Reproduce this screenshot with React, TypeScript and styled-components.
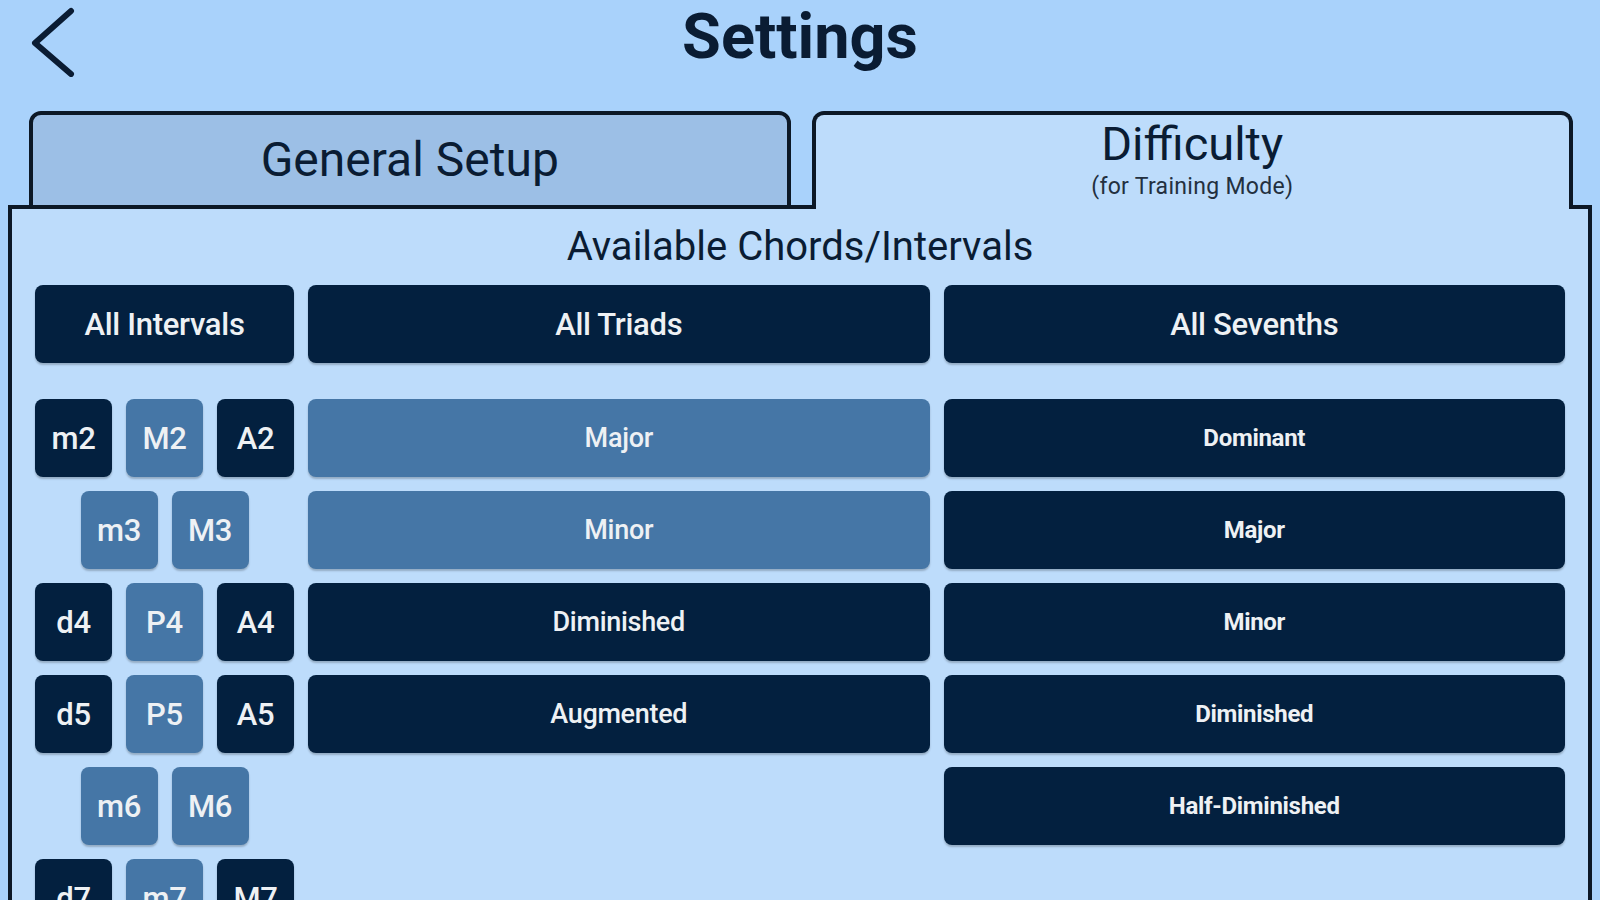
import styled, { createGlobalStyle } from "styled-components";

const C = {
  bg: "#a9d2fb",
  panel: "#bddcfb",
  tabOff: "#9cbfe6",
  line: "#0c1826",
  navy: "#03203f",
  steel: "#4576a6",
  ink: "#0a1c33",
};

const Global = createGlobalStyle`
  html, body {
    margin: 0;
    padding: 0;
    overflow: hidden;
    background: ${C.bg};
    font-family: Roboto, "Noto Sans", "Liberation Sans", sans-serif;
  }
  * { box-sizing: border-box; }
`;

const Screen = styled.div`
  width: 1600px;
  height: 900px;
  background: ${C.bg};
`;

const Header = styled.header`
  height: 111px;
  display: flex;
  justify-content: center;
  align-items: flex-start;
  position: relative;
`;

const BackButton = styled.button`
  position: absolute;
  left: 27px;
  top: 5px;
  width: 48px;
  height: 72px;
  padding: 0;
  border: none;
  background: none;
  cursor: pointer;
`;

const Title = styled.h1`
  margin: 0;
  padding-top: 1px;
  font-size: 63px;
  line-height: 72px;
  font-weight: 700;
  color: ${C.ink};
`;

const TabsRow = styled.div`
  display: flex;
  gap: 21px;
  padding: 0 27px 0 29px;
  margin-bottom: -4px;
  position: relative;
  z-index: 1;
`;

const Tab = styled.div<{ $active?: boolean }>`
  flex: 1;
  height: 98px;
  border: 4px solid ${C.line};
  border-bottom: ${(p) => (p.$active ? "none" : `4px solid ${C.line}`)};
  border-radius: 12px 12px 0 0;
  background: ${(p) => (p.$active ? C.panel : C.tabOff)};
  display: flex;
  flex-direction: column;
  align-items: center;
  justify-content: ${(p) => (p.$active ? "flex-start" : "center")};
  padding-top: ${(p) => (p.$active ? "3px" : "0")};
  color: ${C.ink};
  cursor: pointer;
`;

const TabLabel = styled.span<{ $size: number }>`
  font-size: ${(p) => p.$size}px;
  line-height: 52px;
`;

const TabNote = styled.span`
  margin-top: 4px;
  font-size: 23px;
  line-height: 26px;
  letter-spacing: 0.3px;
  color: #23303f;
`;

const Panel = styled.section`
  margin: 0 8px;
  height: 800px;
  border: 4px solid ${C.line};
  border-bottom: none;
  background: ${C.panel};
  padding: 0 23px;
`;

const Heading = styled.h2`
  margin: 0;
  padding: 14px 0 14px;
  text-align: center;
  font-size: 40px;
  line-height: 48px;
  font-weight: 400;
  color: ${C.ink};
`;

const Grid = styled.div`
  display: grid;
  grid-template-columns: 259px 1fr 1fr;
  column-gap: 14px;
  row-gap: 36px;
`;

const Stack = styled.div`
  display: flex;
  flex-direction: column;
  gap: 14px;
`;

const KeyRow = styled.div`
  display: flex;
  justify-content: center;
  gap: 14px;
`;

const Key = styled.button<{ $on?: boolean; $fs: number; $fw?: number; $square?: boolean }>`
  height: 78px;
  width: ${(p) => (p.$square ? "77px" : "100%")};
  flex: none;
  border: none;
  border-radius: 8px;
  background: ${(p) => (p.$on ? C.steel : C.navy)};
  box-shadow: 0 2px 2px rgba(0, 0, 0, 0.22);
  color: #eef1f4;
  font-family: Roboto, "Noto Sans", sans-serif;
  font-size: ${(p) => p.$fs}px;
  font-weight: ${(p) => p.$fw ?? 500};
  letter-spacing: -0.3px;
  cursor: pointer;
  padding: 0;
`;

type Item = [string, boolean];

const intervals: Item[][] = [
  [["m2", false], ["M2", true], ["A2", false]],
  [["m3", true], ["M3", true]],
  [["d4", false], ["P4", true], ["A4", false]],
  [["d5", false], ["P5", true], ["A5", false]],
  [["m6", true], ["M6", true]],
  [["d7", false], ["m7", true], ["M7", false]],
];

const triads: Item[] = [
  ["Major", true],
  ["Minor", true],
  ["Diminished", false],
  ["Augmented", false],
];

const sevenths: Item[] = [
  ["Dominant", false],
  ["Major", false],
  ["Minor", false],
  ["Diminished", false],
  ["Half-Diminished", false],
];

const BackIcon = () => (
  <svg width="48" height="72" viewBox="0 0 48 72">
    <path
      d="M44 6 L8 38 L44 69"
      fill="none"
      stroke={C.ink}
      strokeWidth="6"
      strokeLinecap="round"
      strokeLinejoin="round"
    />
  </svg>
);

export default function App() {
  return (
    <Screen>
      <Global />
      <Header>
        <BackButton aria-label="Back">
          <BackIcon />
        </BackButton>
        <Title>Settings</Title>
      </Header>
      <TabsRow>
        <Tab>
          <TabLabel $size={48}>General Setup</TabLabel>
        </Tab>
        <Tab $active>
          <TabLabel $size={47}>Difficulty</TabLabel>
          <TabNote>(for Training Mode)</TabNote>
        </Tab>
      </TabsRow>
      <Panel>
        <Heading>Available Chords/Intervals</Heading>
        <Grid>
          <Key $fs={31}>All Intervals</Key>
          <Key $fs={31}>All Triads</Key>
          <Key $fs={31}>All Sevenths</Key>
          <Stack>
            {intervals.map((row, i) => (
              <KeyRow key={i}>
                {row.map(([label, on]) => (
                  <Key key={label} $square $on={on} $fs={31}>
                    {label}
                  </Key>
                ))}
              </KeyRow>
            ))}
          </Stack>
          <Stack>
            {triads.map(([label, on]) => (
              <Key key={label} $on={on} $fs={27}>
                {label}
              </Key>
            ))}
          </Stack>
          <Stack>
            {sevenths.map(([label, on]) => (
              <Key key={label} $on={on} $fs={24} $fw={700}>
                {label}
              </Key>
            ))}
          </Stack>
        </Grid>
      </Panel>
    </Screen>
  );
}
